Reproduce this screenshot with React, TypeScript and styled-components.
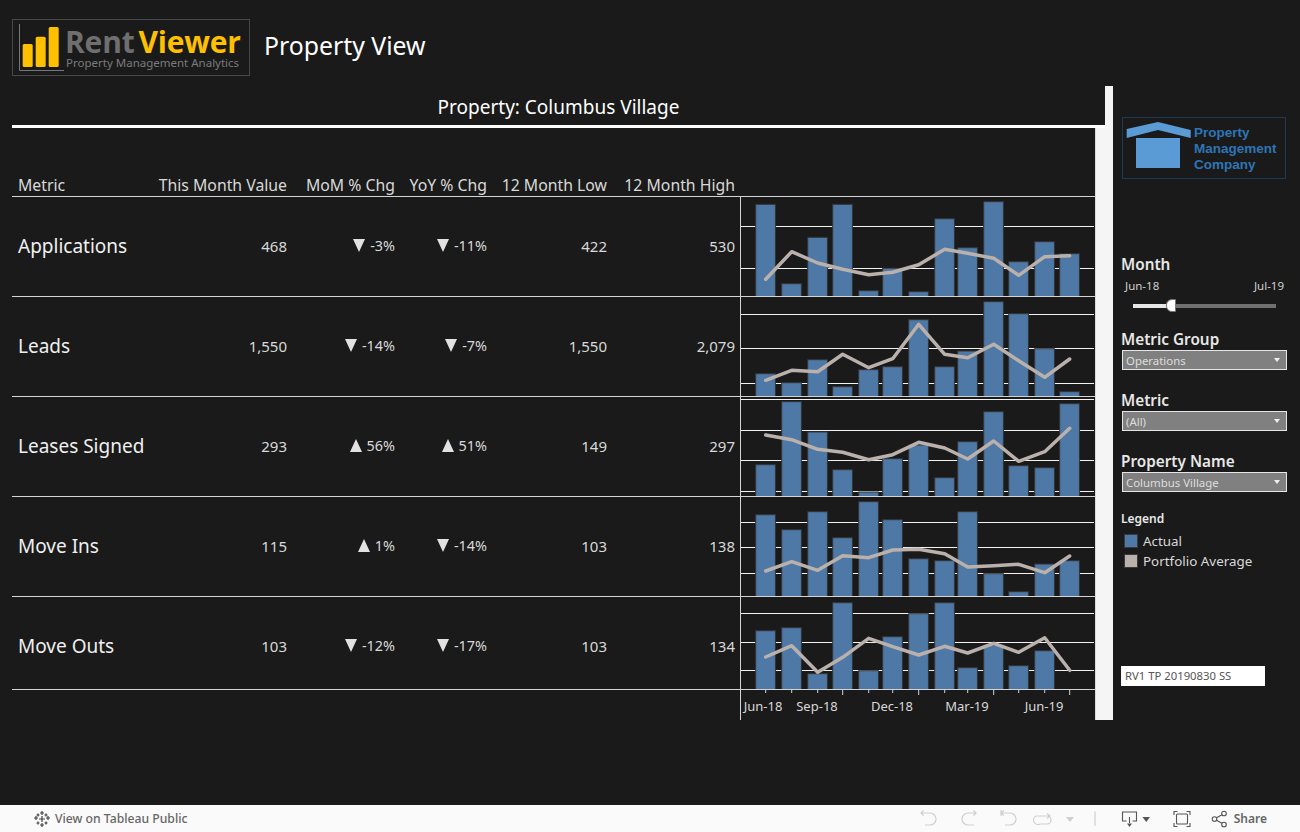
import styled, { createGlobalStyle } from "styled-components";

const GlobalStyle = createGlobalStyle`
  html, body {
    margin: 0;
    padding: 0;
    background: #1a1a1a;
  }
  body {
    font-family: "Noto Sans", "Open Sans", sans-serif;
  }
`;

interface ChartData {
  tops: (number | null)[];
  grid: number[];
  line: number[];
}

interface Row {
  name: string;
  value: string;
  mom: { dir: "up" | "down"; text: string };
  yoy: { dir: "up" | "down"; text: string };
  low: string;
  high: string;
  height: number;
  chart: ChartData;
}

const barX = [15.7, 41.7, 67.7, 92.7, 118.7, 142.7, 168.7, 194.7, 217.7, 243.7, 268.7, 294.7, 319.7];

const rows: Row[] = [
  {
    name: "Applications",
    value: "468",
    mom: { dir: "down", text: "-3%" },
    yoy: { dir: "down", text: "-11%" },
    low: "422",
    high: "530",
    height: 100,
    chart: {
      tops: [8.3, 87.7, 41.3, 8.3, 94.7, 72.3, 95.7, 22.7, 51.7, 5.7, 65.7, 45.7, 57.7],
      grid: [30.5, 72.5],
      line: [83.3, 55.7, 67, 73.3, 78.7, 76.3, 68.7, 53.3, 57.3, 62.3, 79.3, 60.7, 59.7],
    },
  },
  {
    name: "Leads",
    value: "1,550",
    mom: { dir: "down", text: "-14%" },
    yoy: { dir: "down", text: "-7%" },
    low: "1,550",
    high: "2,079",
    height: 100,
    chart: {
      tops: [77.7, 86.7, 63.7, 90.7, 73.7, 70.7, 23.7, 70.7, 55, 5.7, 17.7, 52.7, 95.7],
      grid: [18.5, 52.5, 87.5],
      line: [84.3, 74.3, 75.7, 58.3, 71.7, 62.7, 28.3, 58.3, 61.7, 48.3, 64.7, 81.3, 63],
    },
  },
  {
    name: "Leases Signed",
    value: "293",
    mom: { dir: "up", text: "56%" },
    yoy: { dir: "up", text: "51%" },
    low: "149",
    high: "297",
    height: 100,
    chart: {
      tops: [68.7, 5.7, 36, 73.7, 96, 62.7, 49, 81.7, 45.7, 15.7, 69.7, 71.7, 7.7],
      grid: [3.5, 34.5, 64.5, 95.5],
      line: [39, 43.7, 53.3, 56.3, 63.7, 58.7, 46.3, 52, 63, 45, 65.3, 55.7, 32.3],
    },
  },
  {
    name: "Move Ins",
    value: "115",
    mom: { dir: "up", text: "1%" },
    yoy: { dir: "down", text: "-14%" },
    low: "103",
    high: "138",
    height: 100,
    chart: {
      tops: [18.7, 33.7, 15.7, 41.7, 5.7, 23.7, 62.7, 64.7, 15.7, 77.7, 95.7, 68, 64.7],
      grid: [26.5, 51.5, 77.5],
      line: [75, 65.7, 74.3, 59.7, 61.7, 54, 53.3, 57.7, 71, 69.7, 68.3, 76.7, 60],
    },
  },
  {
    name: "Move Outs",
    value: "103",
    mom: { dir: "down", text: "-12%" },
    yoy: { dir: "down", text: "-17%" },
    low: "103",
    high: "134",
    height: 93,
    chart: {
      tops: [34.7, 31.7, 77.7, 6.7, 74.7, 40.7, 17.7, 6.7, 71.7, 49, 69.7, 54.7, null],
      grid: [17.5, 46.5, 74.5],
      line: [61, 49.7, 76.3, 61.3, 42.3, 50.7, 59, 50.3, 57, 47.3, 56.3, 41.7, 74.3],
    },
  },
];

const axisLabels = [
  { x: 23, text: "Jun-18" },
  { x: 77, text: "Sep-18" },
  { x: 152, text: "Dec-18" },
  { x: 227, text: "Mar-19" },
  { x: 304, text: "Jun-19" },
];

const Page = styled.div`
  width: 1300px;
  height: 832px;
  display: flex;
  flex-direction: column;
  background: #1a1a1a;
  overflow: hidden;
`;

const Header = styled.header`
  height: 86px;
  box-sizing: border-box;
  padding: 19px 0 0 12px;
  display: flex;
  align-items: flex-start;
  gap: 14px;
`;

const LogoBox = styled.div`
  width: 238px;
  height: 57px;
  box-sizing: border-box;
  border: 1px solid #474747;
  display: flex;
  padding: 4px 0 0 6px;
  gap: 1px;
`;

const LogoText = styled.div`
  display: flex;
  flex-direction: column;
`;

const LogoName = styled.div`
  font-family: "Open Sans", sans-serif;
  font-weight: 700;
  font-size: 30px;
  line-height: 29px;
  letter-spacing: -0.2px;
  margin-top: 3px;
  color: #6f6f6f;
  white-space: nowrap;

  span {
    color: #ffc000;
    margin-left: 4px;
  }
`;

const LogoSub = styled.div`
  font-size: 11.5px;
  line-height: 13px;
  padding-left: 1px;
  color: #7a7a7a;
  white-space: nowrap;
`;

const PageTitle = styled.h1`
  margin: 10px 0 0;
  font-size: 24.8px;
  line-height: 32px;
  font-weight: 400;
  color: #fff;
`;

const Main = styled.main`
  display: flex;
  align-items: flex-start;
  padding-left: 12px;
`;

const Report = styled.section`
  width: 1101px;
  display: flex;
  flex-direction: column;
`;

const TitleRow = styled.div`
  display: flex;
  height: 42px;
`;

const ReportTitle = styled.div`
  flex: 1;
  box-sizing: border-box;
  border-bottom: 3px solid #fff;
  font-size: 19px;
  line-height: 42px;
  text-align: center;
  color: #fff;
`;

const TitleEdge = styled.div`
  width: 8px;
  background: #f5f5f5;
`;

const BodyRow = styled.div`
  display: flex;
`;

const Table = styled.div`
  width: 1083px;
`;

const Strip = styled.div`
  width: 18px;
  box-sizing: border-box;
  background: #f5f5f5;
  border-left: 1px solid #dcdcdc;
`;

const columns = "135px 140px 108px 92px 120px 128px 5px 355px";

const HeadRow = styled.div`
  height: 68px;
  box-sizing: border-box;
  display: grid;
  grid-template-columns: ${columns};
  align-items: end;
  padding-bottom: 1px;
`;

const HeadCell = styled.div<{ $left?: boolean }>`
  font-size: 15.8px;
  line-height: 20px;
  color: #d9d9d9;
  text-align: ${(p) => (p.$left ? "left" : "right")};
  padding-left: ${(p) => (p.$left ? "6px" : "0")};
  white-space: nowrap;
`;

const DataRow = styled.div<{ $height: number }>`
  height: ${(p) => p.$height}px;
  box-sizing: border-box;
  border-top: 1px solid #d4d4d4;
  display: grid;
  grid-template-columns: ${columns};
  grid-template-rows: 99px;
  align-items: center;
`;

const MetricName = styled.div`
  font-size: 19px;
  line-height: 24px;
  margin-top: -1px;
  color: #f0f0f0;
  padding-left: 6px;
  white-space: nowrap;
`;

const NumCell = styled.div`
  font-size: 15px;
  line-height: 20px;
  margin-top: -2px;
  color: #d9d9d9;
  display: flex;
  justify-content: flex-end;
  align-items: center;
  gap: 5px;
`;

const PctText = styled.span`
  font-size: 14.4px;
`;

const Arrow = styled.span<{ $dir: "up" | "down" }>`
  width: 0;
  height: 0;
  border-left: 6px solid transparent;
  border-right: 6px solid transparent;
  ${(p) => (p.$dir === "down" ? "border-top" : "border-bottom")}: 13px solid #e2e2e2;
`;

const ChartCell = styled.div<{ $height: number }>`
  grid-column: 8;
  align-self: start;
  height: ${(p) => p.$height}px;
  box-sizing: border-box;
  border-left: 1px solid #d4d4d4;
`;

const ChartSvg = styled.svg`
  display: block;
  width: 354px;
  height: 100%;
`;

const AxisRow = styled.div`
  height: 31px;
  box-sizing: border-box;
  border-top: 1px solid #d4d4d4;
  display: grid;
  grid-template-columns: ${columns};
`;

const Sidebar = styled.aside`
  width: 179px;
  margin-left: 8px;
  display: flex;
  flex-direction: column;
`;

const CompanyLogo = styled.div`
  width: 164px;
  height: 62px;
  box-sizing: border-box;
  margin: 31px 0 75px 1px;
  border: 1px solid #1f3a55;
  display: flex;
  align-items: center;
  padding-left: 3px;
  gap: 2px;
`;

const CompanyName = styled.div`
  font-family: "Liberation Sans", Arial, sans-serif;
  font-weight: 700;
  font-size: 13.5px;
  line-height: 16px;
  margin-top: 2px;
  color: #2e75b6;
`;

const FilterLabel = styled.div`
  font-size: 15.3px;
  line-height: 20px;
  font-weight: 600;
  color: #e8e8e8;
`;

const SliderEnds = styled.div`
  display: flex;
  justify-content: space-between;
  font-size: 11.5px;
  line-height: 14px;
  color: #cfcfcf;
  padding: 5px 3px 0 4px;
  width: 166px;
  box-sizing: border-box;
`;

const SliderTrack = styled.div`
  position: relative;
  width: 143px;
  height: 4px;
  margin: 11px 0 21px 12px;
  background: #6f6f6f;
`;

const SliderFill = styled.div`
  width: 35px;
  height: 100%;
  background: #e6e6e6;
`;

const SliderThumb = styled.div`
  position: absolute;
  left: 33px;
  top: -5px;
  width: 10px;
  height: 13px;
  box-sizing: border-box;
  background: #fff;
  border: 1px solid #777;
  border-radius: 6px 1px 1px 6px;
`;

const Select = styled.div`
  width: 165px;
  height: 20px;
  box-sizing: border-box;
  margin: 1px 0 20px 1px;
  border: 1px solid #e6e6e6;
  background: #808080;
  display: flex;
  align-items: center;
  justify-content: space-between;
  padding: 0 6px 0 3px;
  font-size: 11.4px;
  color: #dedede;

  &::after {
    content: "";
    width: 0;
    height: 0;
    border-left: 3px solid transparent;
    border-right: 3px solid transparent;
    border-top: 4px solid #f0f0f0;
  }
`;

const LegendTitle = styled.div`
  font-size: 12px;
  line-height: 16px;
  font-weight: 600;
  color: #e8e8e8;
  margin-top: -1px;
`;

const LegendItem = styled.div<{ $color: string }>`
  display: flex;
  align-items: center;
  gap: 5px;
  margin: 6px 0 -2px 3px;
  height: 16px;
  font-size: 13.4px;
  color: #d9d9d9;

  &::before {
    content: "";
    width: 14px;
    height: 14px;
    box-sizing: border-box;
    border: 1px solid #3a3a3a;
    background: ${(p) => p.$color};
  }
`;

const VersionTag = styled.div`
  width: 144px;
  height: 20px;
  margin-top: 99px;
  padding-left: 4px;
  box-sizing: border-box;
  background: #fff;
  color: #555;
  font-size: 11.3px;
  line-height: 20px;
`;

const Toolbar = styled.footer`
  margin-top: auto;
  height: 27px;
  background: #fafafa;
  display: flex;
  align-items: center;
  padding: 0 33px;
`;

const PublicLink = styled.div`
  display: flex;
  align-items: center;
  gap: 4px;
  font-size: 12.2px;
  font-weight: 500;
  color: #666;
`;

const ToolGroup = styled.div`
  margin-left: auto;
  display: flex;
  align-items: center;
`;

const ShareLabel = styled.span`
  font-size: 12px;
  font-weight: 600;
  color: #666;
  margin-left: 5px;
`;

const IconGap = styled.svg<{ $gap: number }>`
  margin-left: ${(p) => p.$gap}px;
`;

const Chart = ({ data, height }: { data: ChartData; height: number }) => (
  <ChartSvg viewBox={`1 1 354 ${height - 1}`} preserveAspectRatio="none">
    {data.grid.map((y) => (
      <line key={y} x1={1} x2={354} y1={y} y2={y} stroke="#f2f2f2" strokeWidth={1} />
    ))}
    {data.tops.map((top, i) =>
      top === null ? null : (
        <rect
          key={i}
          x={barX[i]}
          y={top}
          width={19.7}
          height={height - top + 2}
          fill="#4e79a7"
          stroke="#333"
          strokeWidth={1}
        />
      )
    )}
    <polyline
      points={data.line.map((y, i) => `${barX[i] + 10},${y}`).join(" ")}
      fill="none"
      stroke="#bab0ac"
      strokeWidth={3.5}
      strokeLinecap="round"
      strokeLinejoin="round"
    />
  </ChartSvg>
);

const TableauMark = () => (
  <svg width="18" height="18" viewBox="0 0 18 18" stroke="#444" strokeWidth="1.2" fill="none">
    <path d="M9 1v4M7 3h4M9 13v4M7 15h4M3 6v4M1 8h4M15 6v4M13 8h4M5 3.500v3M3.500 5h3M13 3.500v3M11.500 5h3M5 11.500v3M3.500 13h3M13 11.500v3M11.500 13h3M9 6v6M6 9h6" />
  </svg>
);

const EditIcons = () => (
  <svg width="202" height="22" viewBox="0 0 202 22" fill="none" strokeWidth="1.2">
    <g stroke="#cfcfcf">
      <path d="M2 5h9a6 6 0 0 1 0 12H6M4.500 2.500 2 5l2.500 2.500" />
      <path d="M57 5h-8a6 6 0 0 0 0 12h6M54.500 2.500 57 5l-2.500 2.500" />
      <path d="M82 2v6M82 5h9a6 6 0 0 1 0 12h-5M85 2.500 82 5l3 2.500" />
      <path d="M117 8h11a4 4 0 0 1 0 8h-7a4 4 0 0 1-4-8M128 5.500 131 8l-3 2.500" />
      <path d="M176 3.500V18" />
    </g>
    <path d="M147 9h8l-4 5z" fill="#cfcfcf" />
  </svg>
);

const ViewIcons = () => (
  <>
    <svg width="34" height="22" viewBox="0 0 34 22" fill="none" stroke="#555" strokeWidth="1.1">
      <path d="M5.500 13H1.500V4h14v9h-4M8.500 9v6" />
      <path d="M6 15.500h5L8.500 19z" fill="#555" stroke="none" />
      <path d="M21.500 9h7.500l-3.750 5z" fill="#555" stroke="none" />
    </svg>
    <IconGap $gap={18} width="18" height="18" viewBox="0 0 18 18" fill="none" stroke="#555" strokeWidth="1.1">
      <path d="M1 5V1.500h3.500M13.500 1.500H17V5M17 13v3.500h-3.500M4.500 16.500H1V13" />
      <rect x="3.500" y="4" width="11" height="10" rx="1" />
    </IconGap>
    <IconGap $gap={20} width="18" height="18" viewBox="0 0 18 18" fill="none" stroke="#555" strokeWidth="1.1">
      <circle cx="3.500" cy="9" r="2.300" />
      <circle cx="13" cy="3.500" r="2.300" />
      <circle cx="13" cy="14.500" r="2.300" />
      <path d="M5.500 7.800 11 4.700M5.500 10.200l5.500 3.100" />
    </IconGap>
  </>
);

export default function App() {
  return (
    <Page>
      <GlobalStyle />
      <Header>
        <LogoBox>
          <svg width="45" height="50" viewBox="0 0 45 50" fill="none">
            <path d="M0.500 0v46.500h45" stroke="#777" strokeWidth="1" />
            <rect x="3.700" y="20" width="10" height="23" rx="1.500" fill="#ffc000" />
            <rect x="16.700" y="12.700" width="10" height="30.300" rx="1.500" fill="#ffc000" />
            <rect x="29.700" y="3" width="10" height="40" rx="1.500" fill="#ffc000" />
          </svg>
          <LogoText>
            <LogoName>
              Rent<span>Viewer</span>
            </LogoName>
            <LogoSub>Property Management Analytics</LogoSub>
          </LogoText>
        </LogoBox>
        <PageTitle>Property View</PageTitle>
      </Header>
      <Main>
        <Report>
          <TitleRow>
            <ReportTitle>Property: Columbus Village</ReportTitle>
            <TitleEdge />
          </TitleRow>
          <BodyRow>
            <Table>
              <HeadRow>
                <HeadCell $left>Metric</HeadCell>
                <HeadCell>This Month Value</HeadCell>
                <HeadCell>MoM % Chg</HeadCell>
                <HeadCell>YoY % Chg</HeadCell>
                <HeadCell>12 Month Low</HeadCell>
                <HeadCell>12 Month High</HeadCell>
              </HeadRow>
              {rows.map((row) => (
                <DataRow key={row.name} $height={row.height}>
                  <MetricName>{row.name}</MetricName>
                  <NumCell>{row.value}</NumCell>
                  <NumCell>
                    <Arrow $dir={row.mom.dir} />
                    <PctText>{row.mom.text}</PctText>
                  </NumCell>
                  <NumCell>
                    <Arrow $dir={row.yoy.dir} />
                    <PctText>{row.yoy.text}</PctText>
                  </NumCell>
                  <NumCell>{row.low}</NumCell>
                  <NumCell>{row.high}</NumCell>
                  <ChartCell $height={row.height - 1}>
                    <Chart data={row.chart} height={row.height} />
                  </ChartCell>
                </DataRow>
              ))}
              <AxisRow>
                <ChartCell $height={30}>
                  <ChartSvg viewBox="1 0 354 30" preserveAspectRatio="none">
                    {barX.map((x, i) => (
                      <line
                        key={x}
                        x1={x + 10}
                        x2={x + 10}
                        y1={0}
                        y2={i % 3 === 0 && i > 0 ? 5 : 3}
                        stroke="#d4d4d4"
                      />
                    ))}
                    {axisLabels.map((l) => (
                      <text
                        key={l.text}
                        x={l.x}
                        y={21}
                        textAnchor="middle"
                        fontSize="13"
                        fill="#d9d9d9"
                      >
                        {l.text}
                      </text>
                    ))}
                  </ChartSvg>
                </ChartCell>
              </AxisRow>
            </Table>
            <Strip />
          </BodyRow>
        </Report>
        <Sidebar>
          <CompanyLogo>
            <svg width="66" height="54" viewBox="0 0 66 54" fill="none">
              <path d="M0.700 8 32 1l32.700 8v8L32 9 0.700 17z" fill="#5b9bd5" />
              <rect x="10" y="17" width="44" height="30" fill="#5b9bd5" />
            </svg>
            <CompanyName>
              Property
              <br />
              Management
              <br />
              Company
            </CompanyName>
          </CompanyLogo>
          <FilterLabel>Month</FilterLabel>
          <SliderEnds>
            <span>Jun-18</span>
            <span>Jul-19</span>
          </SliderEnds>
          <SliderTrack>
            <SliderFill />
            <SliderThumb />
          </SliderTrack>
          <FilterLabel>Metric Group</FilterLabel>
          <Select>Operations</Select>
          <FilterLabel>Metric</FilterLabel>
          <Select>(All)</Select>
          <FilterLabel>Property Name</FilterLabel>
          <Select>Columbus Village</Select>
          <LegendTitle>Legend</LegendTitle>
          <LegendItem $color="#4e79a7">Actual</LegendItem>
          <LegendItem $color="#bab0ac">Portfolio Average</LegendItem>
          <VersionTag>RV1 TP 20190830 SS</VersionTag>
        </Sidebar>
      </Main>
      <Toolbar>
        <PublicLink>
          <TableauMark />
          View on Tableau Public
        </PublicLink>
        <ToolGroup>
          <EditIcons />
          <ViewIcons />
          <ShareLabel>Share</ShareLabel>
        </ToolGroup>
      </Toolbar>
    </Page>
  );
}
